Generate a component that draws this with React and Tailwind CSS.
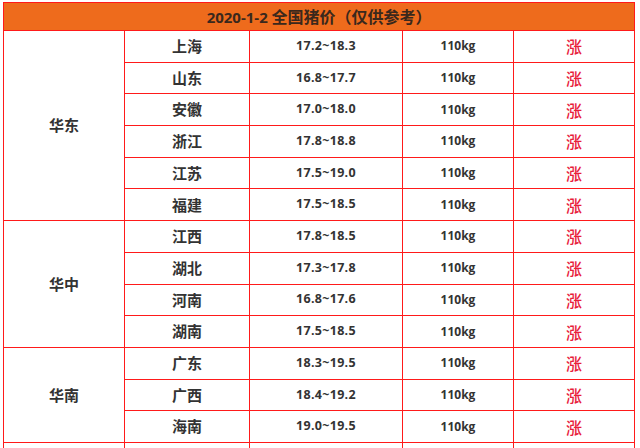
const data = [
  {
    region: '华东',
    rows: [
      ['上海', '17.2~18.3'],
      ['山东', '16.8~17.7'],
      ['安徽', '17.0~18.0'],
      ['浙江', '17.8~18.8'],
      ['江苏', '17.5~19.0'],
      ['福建', '17.5~18.5'],
    ],
  },
  {
    region: '华中',
    rows: [
      ['江西', '17.8~18.5'],
      ['湖北', '17.3~17.8'],
      ['河南', '16.8~17.6'],
      ['湖南', '17.5~18.5'],
    ],
  },
  {
    region: '华南',
    rows: [
      ['广东', '18.3~19.5'],
      ['广西', '18.4~19.2'],
      ['海南', '19.0~19.5'],
    ],
  },
  {
    region: '西南',
    rows: [
      ['四川', '18.0~19.0'],
      ['重庆', '18.0~19.0'],
    ],
  },
]

const cjk = { fontFamily: '"Noto Sans CJK SC", "Noto Sans", sans-serif' }
const num = { fontFamily: '"Open Sans", "Noto Sans CJK SC", sans-serif' }

export default function App() {
  return (
    <div className="w-[640px] h-[448px] overflow-hidden bg-white pl-[3px] pt-[2px]">
      <table className="w-[631px] table-fixed border-collapse text-[#333]" style={cjk}>
        <colgroup>
          <col className="w-[121px]" />
          <col className="w-[125px]" />
          <col className="w-[153px]" />
          <col className="w-[111px]" />
          <col className="w-[121px]" />
        </colgroup>
        <thead>
          <tr>
            <th
              colSpan={5}
              className="h-[28px] border border-[#ff1a1a] bg-[#ee6b1c] p-0 text-center text-[16px] font-bold text-[#3a281c]"
            >
              <span style={num} className="text-[15px]">2020-1-2</span> 全国猪价（仅供参考）
            </th>
          </tr>
        </thead>
        <tbody>
          {data.map((g) =>
            g.rows.map((r, i) => (
              <tr key={r[0]}>
                {i === 0 && (
                  <td
                    rowSpan={g.rows.length}
                    className="border border-[#ff1a1a] p-0 text-center text-[15px] font-bold"
                  >
                    {g.region}
                  </td>
                )}
                <td className="h-[31.7px] border border-[#ff1a1a] p-0 text-center text-[15px] font-bold">
                  {r[0]}
                </td>
                <td className="border border-[#ff1a1a] p-0 text-center text-[12.5px] font-bold tracking-[0.3px]" style={num}>
                  {r[1]}
                </td>
                <td className="border border-[#ff1a1a] p-0 text-center text-[12px] font-bold" style={num}>
                  110kg
                </td>
                <td className="border border-[#ff1a1a] p-0 text-center text-[16px] font-medium text-[#e8203a]">涨</td>
              </tr>
            ))
          )}
        </tbody>
      </table>
    </div>
  )
}
